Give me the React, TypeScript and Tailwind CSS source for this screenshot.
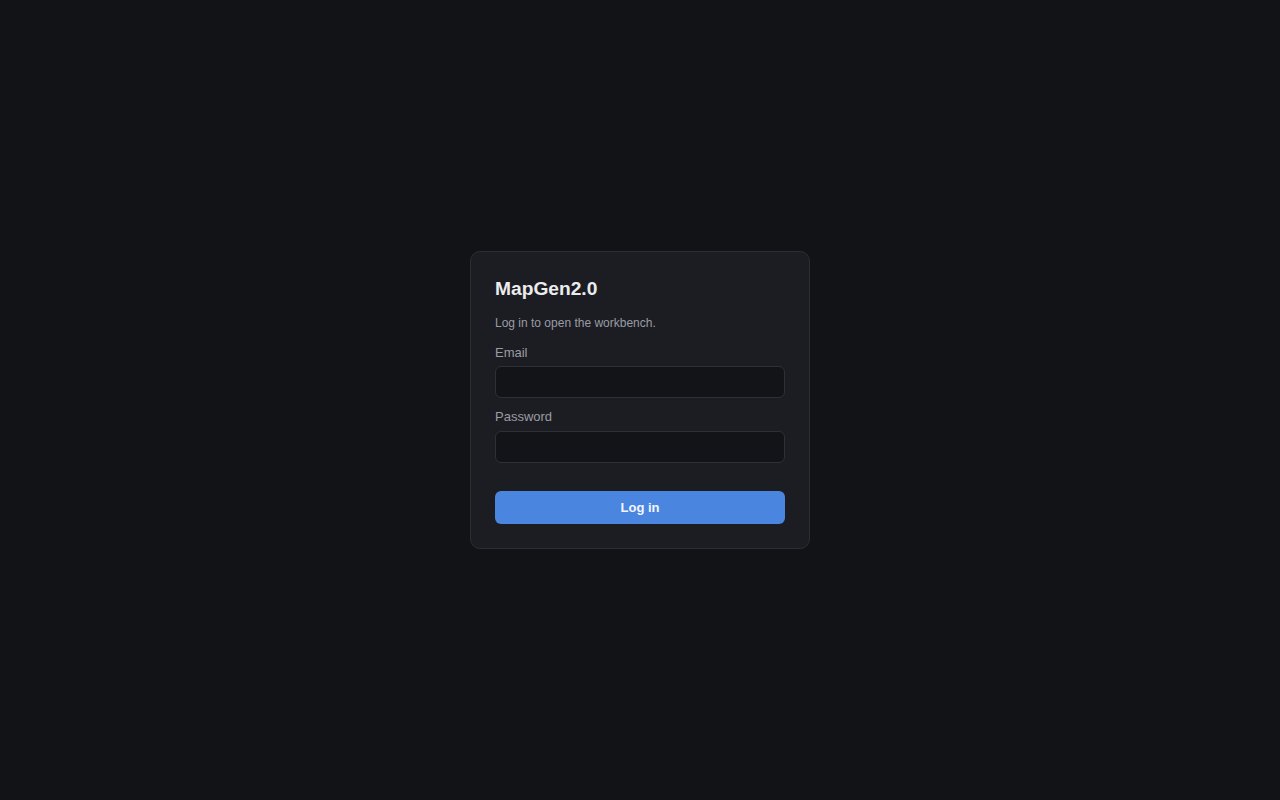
import React from "react";

export default function App() {
  return (
    <div
      className="min-h-screen w-full flex items-center justify-center bg-[#121317]"
      style={{ fontFamily: '"Liberation Sans", Arial, sans-serif' }}
    >
      <div className="w-[340px] rounded-[10px] border border-[#2c2e35] bg-[#1c1d22] px-6 pt-6 pb-6">
        <h1 className="text-[19.2px] leading-[24px] font-bold text-[#ececef] mt-[1px]">MapGen2.0</h1>
        <p className="mt-[14px] text-[12px] leading-[16px] text-[#9a9ca5]">Log in to open the workbench.</p>
        <label className="block mt-[14px] text-[13px] leading-[16px] text-[#9a9ca5]">Email</label>
        <input
          type="email"
          className="block mt-[5px] w-full h-[32px] rounded-[6px] border border-[#2e3038] bg-[#131418] px-2 text-[13px] text-[#ececef] outline-none"
        />
        <label className="block mt-[11px] text-[13px] leading-[16px] text-[#9a9ca5]">Password</label>
        <input
          type="password"
          className="block mt-[6px] w-full h-[32px] rounded-[6px] border border-[#2e3038] bg-[#131418] px-2 text-[13px] text-[#ececef] outline-none"
        />
        <button className="mt-[28px] w-full h-[33px] rounded-[6px] bg-[#4a86e0] text-[13px] font-bold text-[#f3f6fc]">
          Log in
        </button>
      </div>
    </div>
  );
}
